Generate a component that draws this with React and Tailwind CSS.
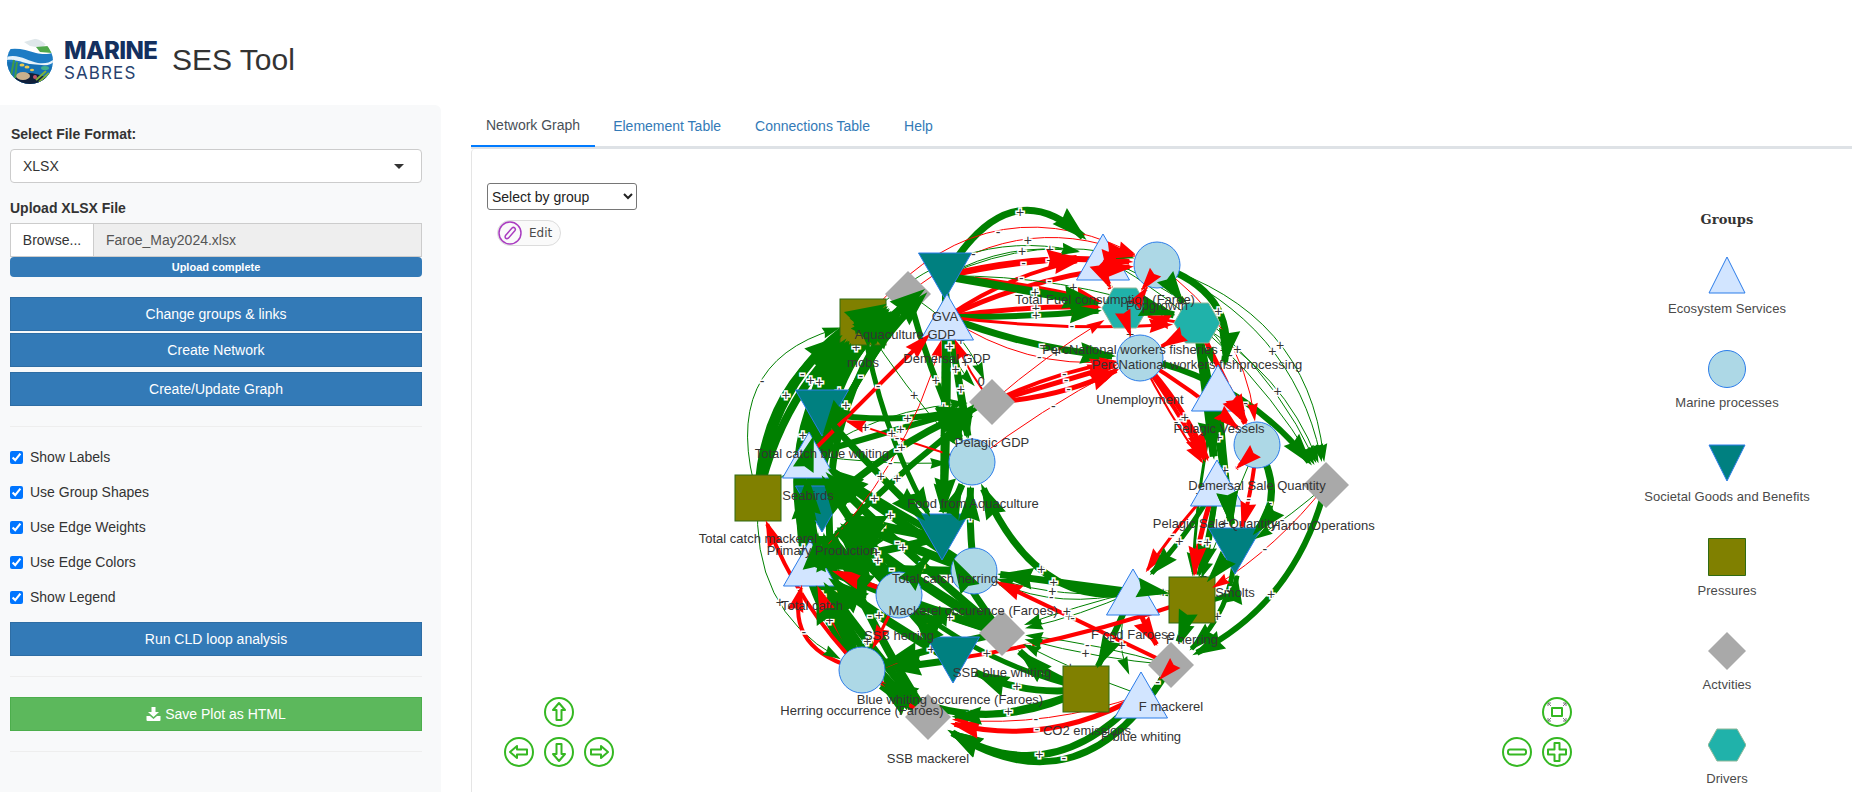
import React from 'react';

const G = '#008000';
const R = '#ff0000';

// kind, x, y, label, label x, label y
const NODES = {
    gva: ['down', 945, 277, 'GVA', 945, 322],
    aqg: ['dia', 908, 295, 'Aquaculture GDP', 905, 340],
    mobs: ['sq', 863, 323, 'mobs', 863, 368],
    dem: ['up', 947, 318, 'Demersal GDP', 947, 364],
    pel: ['dia', 992, 403, 'Pelagic GDP', 992, 448],
    food: ['cir', 972, 463, 'Food from Aquaculture', 973, 509],
    tcb: ['down', 822, 414, 'Total catch blue whiting', 822, 459],
    seab: ['up', 809, 456, 'Seabirds', 808, 501],
    tcm: ['sq', 758, 499, 'Total catch mackerel', 758, 544],
    pp: ['down', 822, 510, 'Primary Production', 822, 556],
    tc: ['up', 810, 564, 'Total catch', 812, 611],
    tch: ['down', 942, 538, 'Total catch herring', 945, 584],
    mo: ['cir', 974, 572, 'Mackerel occurence (Faroes)', 973, 616],
    ssbh: ['cir', 899, 596, 'SSB herring', 899, 641],
    ssbb: ['dia', 1002, 634, 'SSB blue whiting', 1002, 678],
    bwo: ['down', 953, 661, 'Blue whiting occurence (Faroes)', 950, 705],
    hero: ['cir', 862, 671, 'Herring occurrence (Faroes)', 862, 716],
    ssbm: ['dia', 928, 718, 'SSB mackerel', 928, 764],
    co2: ['sq', 1086, 690, 'CO2 emissions', 1087, 736],
    fbw: ['up', 1141, 696, 'F blue whiting', 1141, 742],
    fm: ['dia', 1171, 666, 'F mackerel', 1171, 712],
    fcod: ['up', 1133, 593, 'F cod Faroese', 1133, 640],
    fher: ['sq', 1192, 601, 'F herring', 1192, 645],
    smo: ['down', 1235, 552, 'Smolts', 1235, 598],
    fuel: ['up', 1103, 258, 'Total Fuel consumption (Faroe)', 1105, 305],
    pop: ['cir', 1157, 266, 'Popgrowth', 1157, 311],
    fish: ['hex', 1125, 309, 'PercNational workers fisheries', 1130, 355],
    fpr: ['hex', 1197, 324, 'PercNational workers fishprocessing', 1197, 370],
    une: ['cir', 1140, 359, 'Unemployment', 1140, 405],
    pv: ['up', 1218, 389, 'Pelagic Vessels', 1219, 434],
    dsq: ['cir', 1257, 446, 'Demersal Sale Quantity', 1257, 491],
    psq: ['up', 1217, 484, 'Pelagic Sale Quantity', 1215, 529],
    harb: ['dia', 1326, 486, 'HarborOperations', 1323, 531],
};

// from, to, curve (share of length, or a control point), width, colour
const EDGES = [
    ['gva', 'fuel', [1016, 158], 7, G], ['aqg', 'pop', 0.32, 1, R], ['mobs', 'pop', 0.42, 1, R], ['mobs', 'fuel', 0.3, 1, G],
    ['gva', 'fuel', 0.05, 6, R], ['gva', 'pop', 0.1, 6, R], ['dem', 'pop', 0.1, 5, R], ['dem', 'fuel', 0.12, 4, R],
    ['gva', 'fish', 0.05, 4, R], ['dem', 'fish', 0.05, 5, R], ['gva', 'fpr', 0.1, 1, G], ['gva', 'fish', 0, 8, G],
    ['dem', 'fish', -0.03, 6, G], ['dem', 'une', -0.08, 7, G], ['dem', 'fpr', -0.05, 3, R], ['dem', 'une', -0.2, 1, R],
    ['gva', 'fuel', 0.2, 1, G], ['gva', 'pop', 0.2, 1, G],
    ['pel', 'une', 0, 5, R], ['pel', 'une', 0.08, 4, R], ['pel', 'une', -0.12, 5, R], ['pel', 'fish', 0.05, 1, R], ['food', 'une', 0.05, 1, R],
    ['fuel', 'pop', 0.2, 5, R], ['fish', 'pop', -0.2, 3, R], ['fish', 'fpr', 0.1, 7, G], ['pop', 'fpr', 0, 6, G],
    ['fpr', 'fish', 0.1, 3, R], ['fpr', 'une', 0.05, 4, R], ['fish', 'une', -0.1, 4, R], ['pop', 'fish', 0.1, 3, R], ['fuel', 'fish', -0.2, 5, R],
    ['pop', 'pv', 0.5, 7, G], ['une', 'harb', 0.2, 6, G], ['pop', 'harb', 0.28, 1, G], ['pop', 'harb', 0.35, 1, G],
    ['fpr', 'harb', 0.2, 1, G], ['fuel', 'harb', 0.2, 1, G], ['fuel', 'harb', 0.14, 1, G], ['pop', 'dsq', 0.25, 1, R],
    ['fpr', 'pv', 0.5, 1, G], ['pop', 'pv', 0.15, 1, G],
    ['une', 'psq', 0.04, 4, R], ['une', 'psq', -0.04, 2, R], ['une', 'dsq', 0.05, 4, R], ['une', 'psq', 0.1, 5, R],
    ['fpr', 'psq', 0, 8, G], ['fpr', 'smo', 0.02, 7, G], ['fpr', 'dsq', 0, 5, R], ['pv', 'dsq', 0.08, 5, R],
    ['pv', 'smo', -0.02, 7, G], ['pv', 'fher', -0.05, 3, G], ['dsq', 'psq', 0.1, 4, R], ['dsq', 'smo', 0.45, 7, G],
    ['dsq', 'smo', 0.05, 4, R], ['psq', 'fcod', -0.05, 3, R], ['dsq', 'fher', 0, 1, G],
    ['harb', 'fm', 0.25, 6, G], ['harb', 'smo', 0.05, 1, G], ['harb', 'fher', 0.1, 1, R],
    ['smo', 'fm', 0.25, 5, G], ['fher', 'smo', -0.7, 5, G], ['psq', 'fher', 0.05, 6, G], ['psq', 'fher', -0.08, 5, R],
    ['psq', 'fcod', 0.08, 5, G], ['smo', 'fher', -0.02, 6, G], ['psq', 'fm', 0.1, 2, G],
    ['fcod', 'fher', 0.12, 6, G], ['fher', 'fm', 0, 6, G], ['fcod', 'fm', -0.1, 5, R], ['fcod', 'co2', 0.02, 6, G],
    ['fm', 'fbw', 0.1, 3, R], ['fcod', 'fbw', -0.3, 1, G],
    ['fm', 'ssbm', 0.55, 7, G], ['fbw', 'ssbm', 0.45, 7, G], ['fbw', 'ssbm', 0.22, 5, R], ['co2', 'hero', 0.3, 7, G],
    ['co2', 'bwo', 0.18, 7, G], ['co2', 'ssbb', 0.15, 7, G], ['co2', 'ssbh', 0.12, 5, G], ['fbw', 'ssbm', 0.12, 1, R],
    ['co2', 'ssbm', 0.1, 5, G],
    ['fm', 'ssbb', 0.05, 1, G], ['fm', 'ssbb', -0.05, 1, G], ['fbw', 'ssbb', 0.04, 1, G], ['fcod', 'ssbb', 0.06, 1, G],
    ['fcod', 'ssbb', -0.03, 1, G], ['fcod', 'mo', 0.12, 1, G], ['fcod', 'mo', 0.2, 1, G], ['fcod', 'mo', 0, 7, G],
    ['fcod', 'food', [1030, 612], 7, G], ['fm', 'mo', 0, 4, R], ['fher', 'hero', 0.06, 4, R],
    // fan in the lower left
    ['ssbb', 'pp', 0.04, 10, G], ['ssbb', 'tc', 0.02, 9, G], ['ssbh', 'pp', 0.03, 10, G], ['ssbh', 'tc', 0, 5, R],
    ['mo', 'seab', 0.02, 9, G], ['mo', 'pp', 0.02, 9, G], ['tch', 'pp', 0.05, 9, G], ['bwo', 'pp', 0, 9, G],
    ['bwo', 'tc', 0.05, 9, G], ['hero', 'tc', 0.12, 8, G], ['hero', 'pp', 0.1, 8, G], ['hero', 'seab', 0.2, 9, G],
    ['ssbb', 'tch', 0.05, 7, G], ['ssbh', 'tch', 0, 7, G], ['bwo', 'ssbh', 0.03, 7, G], ['ssbm', 'hero', 0.05, 7, G],
    ['ssbm', 'hero', -0.12, 7, G], ['ssbh', 'hero', 0, 3, R], ['ssbb', 'ssbh', 0.05, 6, G],
    ['ssbm', 'tc', 0.02, 8, G], ['ssbm', 'pp', 0.05, 8, G], ['ssbb', 'seab', 0.03, 8, G], ['bwo', 'seab', 0.03, 8, G],
    ['tch', 'seab', 0.03, 7, G], ['tch', 'tc', 0.03, 8, G], ['mo', 'tc', 0.02, 8, G], ['hero', 'pp', 0.25, 8, G],
    ['ssbm', 'seab', 0.25, 7, G], ['ssbb', 'hero', -0.03, 7, G], ['bwo', 'hero', 0.02, 7, G],
    // left side of the ring
    ['tcm', 'aqg', 0.3, 9, G], ['tcm', 'mobs', 0.28, 8, G], ['seab', 'mobs', 0.25, 9, G], ['tcb', 'mobs', 0.12, 8, G],
    ['tcb', 'aqg', 0.15, 9, G], ['pp', 'mobs', 0.25, 8, G], ['tc', 'mobs', 0.28, 8, G], ['tc', 'gva', 0.22, 7, G],
    ['hero', 'tcb', 0.3, 7, G], ['hero', 'tcm', 0.12, 4, R], ['tcm', 'mobs', 0.55, 1, G], ['tcm', 'hero', -0.35, 1, G],
    ['ssbm', 'tc', 0.2, 4, R], ['hero', 'tc', 0.6, 4, R],
    ['tcm', 'aqg', 0.22, 8, G], ['seab', 'aqg', 0.22, 8, G], ['tcb', 'gva', 0.15, 7, G], ['pp', 'aqg', 0.24, 8, G],
    ['tc', 'aqg', 0.24, 7, G], ['hero', 'mobs', 0.3, 7, G], ['hero', 'aqg', 0.28, 7, G],
    // middle
    ['dem', 'food', 0.02, 6, G], ['gva', 'food', -0.03, 5, G], ['gva', 'tch', 0, 5, G], ['mobs', 'tch', -0.1, 5, G],
    ['aqg', 'seab', 0.03, 7, G], ['tcb', 'pel', -0.12, 6, G], ['seab', 'pel', 0, 6, G], ['tc', 'pel', 0.05, 6, G],
    ['tcm', 'pel', 0.2, 1, G], ['pel', 'food', -0.7, 4, G], ['mo', 'food', 0.05, 7, G], ['tch', 'food', 0.03, 7, G],
    ['seab', 'dem', 0, 4, R], ['pel', 'dem', 0.1, 2, R], ['food', 'tcb', 0, 2, R], ['tc', 'dem', -0.15, 1, R],
    ['aqg', 'pel', 0.2, 1, G], ['mobs', 'food', -0.05, 1, G], ['gva', 'pel', -0.3, 1, G], ['seab', 'food', -0.05, 1, G],
    ['aqg', 'food', -0.05, 6, G], ['dem', 'tch', 0.02, 7, G], ['tcb', 'tch', -0.02, 7, G], ['pp', 'pel', 0.1, 7, G],
];

const bez = (p, c, q, t) => {
    const u = 1 - t;
    return [u * u * p[0] + 2 * u * t * c[0] + t * t * q[0], u * u * p[1] + 2 * u * t * c[1] + t * t * q[1]];
};

// works out the curve, where it meets the target node, and the arrow head on that point
const buildEdge = ([a, b, curve, w, color], i) => {
    const p = [NODES[a][1], NODES[a][2]];
    const q = [NODES[b][1], NODES[b][2]];
    const dx = q[0] - p[0];
    const dy = q[1] - p[1];
    const mid = [(p[0] + q[0]) / 2, (p[1] + q[1]) / 2];
    const c = Array.isArray(curve) ? curve : [mid[0] + dy * curve, mid[1] - dx * curve];
    let t = 1;
    while (t > 0.3 && Math.hypot(bez(p, c, q, t)[0] - q[0], bez(p, c, q, t)[1] - q[1]) < 23) t -= 0.005;
    const tip = bez(p, c, q, t);
    const back = bez(p, c, q, t - 0.03);
    const ang = Math.atan2(tip[1] - back[1], tip[0] - back[0]);
    const len = 15 + 3 * w;
    const at = (x, y) => [tip[0] + x * Math.cos(ang) - y * Math.sin(ang), tip[1] + x * Math.sin(ang) + y * Math.cos(ang)].join(',');
    const head = [at(0, 0), at(-len, len * 0.3), at(-len * 0.9, 0), at(-len, -len * 0.3)].join(' ');
    // line stops inside the head so its square end does not poke through
    const stop = bez(p, c, q, t - 0.02);
    const cc = [p[0] + (c[0] - p[0]) * t, p[1] + (c[1] - p[1]) * t];
    const label = bez(p, c, q, 0.5);
    const plus = color === G ? i % 5 !== 3 : i % 4 === 1;
    return { d: `M${p[0]} ${p[1]} Q${cc[0]} ${cc[1]} ${stop[0]} ${stop[1]}`, head, w, color, label, sign: plus ? '+' : '-' };
};

const BUILT = EDGES.map(buildEdge);

const Shape = ({ kind, x, y }) => {
    if (kind === 'up') return <polygon points={`${x},${y - 23} ${x + 26.5},${y + 23} ${x - 26.5},${y + 23}`} fill="#d2e5ff" stroke="#2b7ce9" strokeWidth="1" />;
    if (kind === 'down') return <polygon points={`${x},${y + 23} ${x + 26.5},${y - 23} ${x - 26.5},${y - 23}`} fill="#008080" stroke="#2b7ce9" strokeWidth="1" />;
    if (kind === 'cir') return <circle cx={x} cy={y} r="23" fill="#add8e6" stroke="#2b7ce9" strokeWidth="1" />;
    if (kind === 'sq') return <rect x={x - 23} y={y - 23} width="46" height="46" fill="#808000" stroke="#2f6b12" strokeWidth="1" />;
    if (kind === 'dia') return <polygon points={`${x},${y - 23} ${x + 23},${y} ${x},${y + 23} ${x - 23},${y}`} fill="#a9a9a9" />;
    return <polygon points={`${x - 23},${y} ${x - 11.5},${y - 20} ${x + 11.5},${y - 20} ${x + 23},${y} ${x + 11.5},${y + 20} ${x - 11.5},${y + 20}`} fill="#20b2aa" stroke="#8fb89a" strokeWidth="1" />;
};

const NavButton = ({ x, y, children }) => (
    <g transform={`translate(${x} ${y})`}>
        <circle r="14" fill="#fff" stroke="#35b822" strokeWidth="2" />
        <g fill="none" stroke="#35b822" strokeWidth="2" strokeLinejoin="round">{children}</g>
    </g>
);

const ARROW_UP = 'M0 -9 L6 -2 L2.5 -2 L2.5 8 L-2.5 8 L-2.5 -2 L-6 -2 Z';

const Graph = () => (
    <svg className="absolute inset-0" width="1130" height="642" viewBox="472 150 1130 642" fontFamily="'Liberation Sans', Arial, sans-serif">
        {BUILT.map((e, i) => (
            <path key={i} d={e.d} fill="none" stroke={e.color} strokeWidth={e.w} />
        ))}
        {BUILT.map((e, i) => (
            <text key={i} x={e.label[0]} y={e.label[1] + 5} textAnchor="middle" fontSize="14" fill="#343434" stroke="#fff" strokeWidth="3" paintOrder="stroke">{e.sign}</text>
        ))}
        {Object.entries(NODES).map(([id, n]) => (
            <Shape key={id} kind={n[0]} x={n[1]} y={n[2]} />
        ))}
        {BUILT.map((e, i) => (
            <polygon key={i} points={e.head} fill={e.color} />
        ))}
        {Object.entries(NODES).map(([id, n]) => (
            <text key={id} x={n[4]} y={n[5]} textAnchor="middle" fontSize="13" fill="#343434">{n[3]}</text>
        ))}
        <text x="981" y="387" textAnchor="middle" fontSize="13" fill="#343434">0</text>

        <NavButton x={559} y={713}><path d={ARROW_UP} /></NavButton>
        <NavButton x={519} y={753}><path d={ARROW_UP} transform="rotate(-90)" /></NavButton>
        <NavButton x={559} y={753}><path d={ARROW_UP} transform="rotate(180)" /></NavButton>
        <NavButton x={599} y={753}><path d={ARROW_UP} transform="rotate(90)" /></NavButton>
        <NavButton x={1557} y={713}>
            <rect x="-5" y="-4" width="10" height="8" />
            <path d="M-9 -9 L-6 -6 M9 -9 L6 -6 M-9 9 L-6 6 M9 9 L6 6 M-9 -6 L-9 -9 L-6 -9 M9 -6 L9 -9 L6 -9 M-9 6 L-9 9 L-6 9 M9 6 L9 9 L6 9" stroke="#777" strokeWidth="1" />
        </NavButton>
        <NavButton x={1517} y={753}><rect x="-9" y="-2.5" width="18" height="5" rx="2" /></NavButton>
        <NavButton x={1557} y={753}>
            <path d="M-2.5 -9 L2.5 -9 L2.5 -2.5 L9 -2.5 L9 2.5 L2.5 2.5 L2.5 9 L-2.5 9 L-2.5 2.5 L-9 2.5 L-9 -2.5 L-2.5 -2.5 Z" />
        </NavButton>
    </svg>
);

const LEGEND = [
    ['Ecosystem Services', '19,1 37,37 1,37', '#d2e5ff', '#2b7ce9'],
    ['Marine processes', null, '#add8e6', '#2b7ce9'],
    ['Societal Goods and Benefits', '1,1 37,1 19,37', '#008080', '#2b7ce9'],
    ['Pressures', '0.5,0.5 37.5,0.5 37.5,37.5 0.5,37.5', '#808000', '#2f6b12'],
    ['Actvities', '19,0 38,19 19,38 0,19', '#a9a9a9', 'none'],
    ['Drivers', '0,19 9,3 29,3 38,19 29,35 9,35', '#20b2aa', '#8fb89a'],
];

const Legend = () => (
    <div className="w-[250px] shrink-0 flex flex-col items-center pt-[61px] text-[13px] tracking-[0.05px] text-[#4a4a4a]">
        <div className="shrink-0 font-['DejaVu_Serif',serif] font-bold text-[13px] leading-5 text-[#333] mb-[26px]">Groups</div>
        {LEGEND.map(([label, points, fill, stroke]) => (
            <div key={label} className="h-[94px] shrink-0 flex flex-col items-center">
                <svg width="38" height="38" viewBox="0 0 38 38">
                    {points ? <polygon points={points} fill={fill} stroke={stroke} /> : <circle cx="19" cy="19" r="18.5" fill={fill} stroke={stroke} />}
                </svg>
                <div className="mt-[5px] leading-5 whitespace-nowrap">{label}</div>
            </div>
        ))}
    </div>
);

const Logo = () => (
    <svg width="48" height="46" viewBox="0 0 48 46">
        <defs>
            <clipPath id="logoClip"><circle cx="24" cy="23" r="23" /></clipPath>
        </defs>
        <g clipPath="url(#logoClip)">
            <rect width="48" height="46" fill="#fff" />
            <path d="M18 4 L32 0 L40 6 L36 10 L24 8 Z" fill="#dfe7ea" />
            <path d="M30 9 L42 8 L46 15 L34 14 Z" fill="#4fa84a" />
            <path d="M0 12 C10 9 20 12 30 15 C38 17 44 16 48 14 L48 46 L0 46 Z" fill="#1d7cc4" />
            <path d="M0 19 C12 15 22 23 32 25 C40 26 45 24 48 21 L48 24 C42 28 34 29 26 27 C16 24 8 21 0 22 Z" fill="#e6f2fa" />
            <path d="M0 24 L48 28 L48 46 L0 46 Z" fill="#1570b4" />
            <path d="M6 46 C8 36 20 33 30 36 C38 38 42 40 46 46 Z" fill="#101f3a" />
            <ellipse cx="17" cy="38" rx="7" ry="4" fill="#c9b08c" />
            <path d="M30 42 L40 33 M33 44 L43 35 M36 45 L45 38" stroke="#7fb23a" strokeWidth="2" />
            <path d="M5 38 L8 22 M9 40 L11 24" stroke="#3e9a4a" strokeWidth="2" />
            <ellipse cx="16" cy="27" rx="2.5" ry="1.5" fill="#e9c94f" />
            <ellipse cx="21" cy="29" rx="2.5" ry="1.5" fill="#e9c94f" />
            <ellipse cx="26" cy="32" rx="2" ry="1.2" fill="#e9c94f" />
            <ellipse cx="39" cy="30" rx="4" ry="2" fill="#3fae8c" />
            <circle cx="29" cy="39" r="2" fill="#c2556a" />
        </g>
    </svg>
);

const SIDE_BTN = 'w-full h-[34px] bg-[#337ab7] border border-[#2e6da4] text-white text-[14px]';
const CHECKS = ['Show Labels', 'Use Group Shapes', 'Use Edge Weights', 'Use Edge Colors', 'Show Legend'];

const Sidebar = () => (
    <aside className="w-[441px] shrink-0 bg-[#f8f9fa] rounded-tr-md pt-[19px] pl-[10px] pr-[19px] text-[14px] text-[#333]">
        <div className="font-bold leading-5 ml-px mb-[5px]">Select File Format:</div>
        <div className="h-[34px] bg-white border border-[#ccc] rounded flex items-center justify-between pl-3 pr-[17px]">
            <span>XLSX</span>
            <span className="w-0 h-0 border-x-[5px] border-x-transparent border-t-[5px] border-t-[#333]" />
        </div>
        <div className="font-bold leading-5 mt-[15px] mb-[5px]">Upload XLSX File</div>
        <div className="h-[34px] flex border border-[#ccc]">
            <div className="w-[83px] bg-white border-r border-[#ccc] flex items-center justify-center">Browse...</div>
            <div className="flex-1 bg-[#eeeeee] text-[#555] flex items-center pl-3">Faroe_May2024.xlsx</div>
        </div>
        <div className="h-5 bg-[#337ab7] rounded text-white text-[11px] font-bold flex items-center justify-center">Upload complete</div>
        <button className={`${SIDE_BTN} mt-5`}>Change groups &amp; links</button>
        <button className={`${SIDE_BTN} mt-[2px]`}>Create Network</button>
        <button className={`${SIDE_BTN} mt-[5px]`}>Create/Update Graph</button>
        <div className="h-px bg-[#eeeeee] mt-5" />
        <div className="flex flex-col gap-[15px] mt-5">
            {CHECKS.map((c) => (
                <label key={c} className="h-5 flex items-center gap-[7px]">
                    <input type="checkbox" defaultChecked className="w-[13px] h-[13px]" />
                    {c}
                </label>
            ))}
        </div>
        <button className={`${SIDE_BTN} mt-[15px]`}>Run CLD loop analysis</button>
        <div className="h-px bg-[#eeeeee] mt-5" />
        <button className="w-full h-[34px] mt-5 bg-[#5cb85c] border border-[#4cae4c] text-white text-[14px] flex items-center justify-center gap-1">
            <svg width="15" height="14" viewBox="0 0 15 14" fill="#fff">
                <path d="M5.5 0 H9.5 V5 H13 L7.5 10 L2 5 H5.5 Z" />
                <path d="M0.5 9 H4 L7.5 12 L11 9 H14.5 V13 Q14.5 14 13.5 14 H1.5 Q0.5 14 0.5 13 Z" />
            </svg>
            Save Plot as HTML
        </button>
        <div className="h-px bg-[#eeeeee] mt-5" />
    </aside>
);

const Tabs = () => (
    <div className="h-[44px] shrink-0 flex gap-1 border-b-[3px] border-[#dee2e6] text-[14px] leading-5 text-[#337ab7]">
        <div className="h-[42px] pt-[10px] px-[15px] border-b-2 border-[#007bff] text-[#495057]">Network Graph</div>
        <div className="pt-[11px] pl-[14px] pr-[15px]">Elemement Table</div>
        <div className="pt-[11px] px-[15px]">Connections Table</div>
        <div className="pt-[11px] px-[15px]">Help</div>
    </div>
);

const EditButton = () => (
    <div className="relative w-[64px] h-[26px] ml-[10px] mt-[10px] rounded-full border border-[#dcdcdc] bg-[#fafafa] flex items-center gap-[7px] text-[12px] text-[#4a4a4a] font-['DejaVu_Sans',sans-serif]">
        <svg width="24" height="24" viewBox="0 0 24 24" fill="none" stroke="#a93cc0" strokeWidth="1.5">
            <circle cx="12" cy="12" r="11" />
            <path d="M7.5 14.5 L14 7 Q15.5 5.8 16.8 7 Q18 8.3 16.8 9.8 L10.3 17.2 Q8.8 18.2 7.6 17.2 Q6.7 16 7.5 14.5 Z" />
        </svg>
        Edit
    </div>
);

const App = () => (
    <div className="w-full h-screen overflow-hidden flex flex-col bg-white font-['Liberation_Sans',Arial,sans-serif]">
        <header className="h-[105px] shrink-0 flex items-start pt-[38px] pl-[6px]">
            <Logo />
            <div className="ml-[10px] mt-[1px] w-[108px] text-[#14305f]">
                <div className="font-['Inter',sans-serif] font-extrabold text-[24px] leading-[24px] tracking-[-0.6px]">MARINE</div>
                <div className="font-['Inter',sans-serif] text-[17px] leading-[20px] tracking-[1.1px] text-[#27426f]">SABRES</div>
            </div>
            <h1 className="text-[30px] leading-[33px] text-[#333] mt-[5px]">SES Tool</h1>
        </header>
        <div className="flex-1 min-h-0 flex">
            <Sidebar />
            <main className="flex-1 min-w-0 ml-[30px] flex flex-col">
                <Tabs />
                <div className="flex-1 min-h-0 flex border-l border-[#e5e5e5] rounded-tl">
                    <div className="relative flex-1 min-w-0 pl-[15px] pt-[34px]">
                        <Graph />
                        <select className="relative block w-[150px] h-[27px] border border-[#767676] rounded-[3px] bg-white text-[14px] text-[#222]">
                            <option>Select by group</option>
                        </select>
                        <EditButton />
                    </div>
                    <Legend />
                </div>
            </main>
        </div>
    </div>
);

export default App;
